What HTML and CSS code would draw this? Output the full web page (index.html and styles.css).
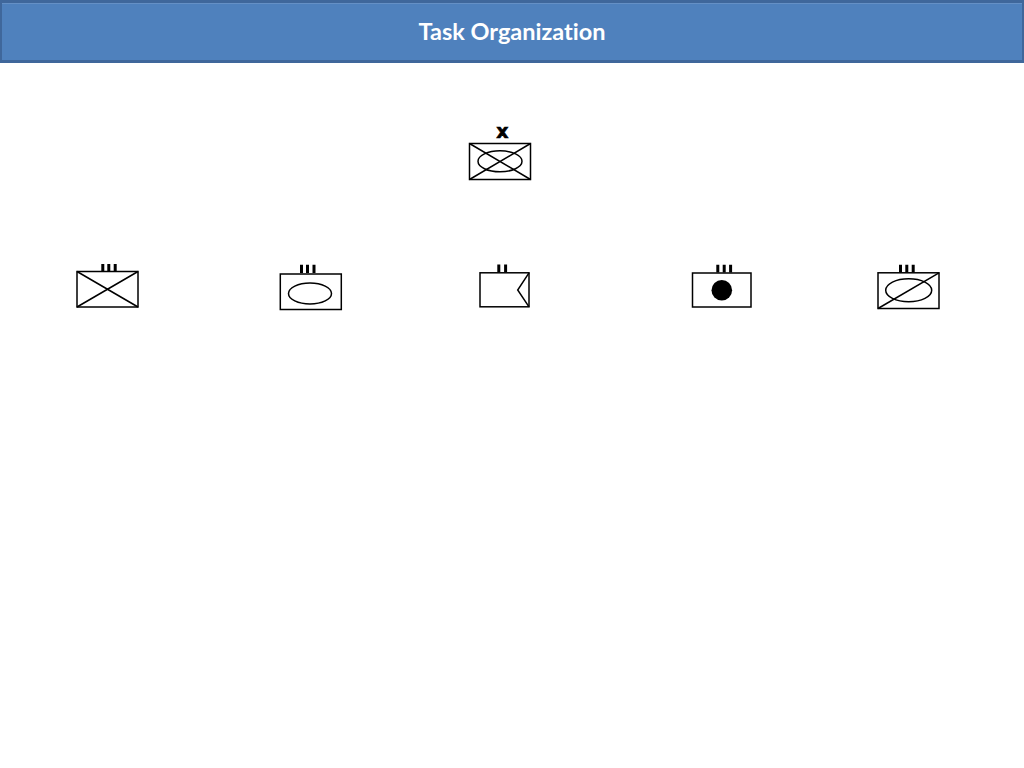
FILE: index.html
```html
<!DOCTYPE html>
<html lang="en">
<head>
<meta charset="utf-8">
<title>Task Organization</title>
<link rel="stylesheet" href="styles.css">
</head>
<body>
<header class="title-bar"><h1 class="title">Task Organization</h1></header>
<main class="chart">
  <svg class="unit unit-hq" viewBox="466 124 68 58">
    <text class="echelon-x" x="502.5" y="138" text-anchor="middle">x</text>
    <rect class="line" x="469.5" y="143.5" width="61" height="36"/>
    <path class="line" d="M469.5 143.5L530.5 179.5M530.5 143.5L469.5 179.5"/>
    <ellipse class="line" cx="500" cy="161.3" rx="22" ry="10.5"/>
  </svg>
  <svg class="unit unit-a" viewBox="74 262 68 48">
    <path class="tick" d="M102.8 264V271M108.8 264V271M115.2 264V271"/>
    <rect class="line" x="77" y="271.5" width="61" height="35.5"/>
    <path class="line" d="M77 271.5L138 307M138 271.5L77 307"/>
  </svg>
  <svg class="unit unit-b" viewBox="278 262 68 50">
    <path class="tick" d="M301.5 264.7V273M307.5 264.7V273M314 264.7V273"/>
    <rect class="line" x="280.3" y="274" width="61" height="35.5"/>
    <ellipse class="line" cx="310" cy="293.5" rx="21.5" ry="10.5"/>
  </svg>
  <svg class="unit unit-c" viewBox="476 262 58 48">
    <path class="tick" d="M498.8 264.5V272M505.6 264.5V272"/>
    <rect class="line" x="480" y="272.8" width="49" height="34"/>
    <path class="line" d="M529 272.8L517.7 290L529 306.8"/>
  </svg>
  <svg class="unit unit-d" viewBox="690 262 64 48">
    <path class="tick" d="M717.8 264.7V272.5M724.2 264.7V272.5M730.6 264.7V272.5"/>
    <rect class="line" x="692.5" y="273" width="58.5" height="34"/>
    <circle class="dot" cx="721.8" cy="290.3" r="10.3"/>
  </svg>
  <svg class="unit unit-e" viewBox="876 262 66 49">
    <path class="tick" d="M900.5 264.7V272.2M906.8 264.7V272.2M913.2 264.7V272.2"/>
    <rect class="line" x="878" y="272.8" width="61" height="35.7"/>
    <path class="line" d="M878 308.5L939 272.8"/>
    <ellipse class="line" cx="908.7" cy="290.3" rx="23" ry="11.5"/>
  </svg>
</main>
</body>
</html>
```
FILE: styles.css
```css
html, body {
  margin: 0;
  padding: 0;
  background: #ffffff;
}
body {
  width: 1024px;
  height: 768px;
  overflow: hidden;
  display: flex;
  flex-direction: column;
}
.title-bar {
  box-sizing: border-box;
  height: 63px;
  flex: none;
  display: flex;
  align-items: center;
  justify-content: center;
  padding-top: 1px;
  background: #4f81bd;
  border: 2px solid #3f679b;
  border-top-width: 3px;
  border-bottom-width: 3px;
  box-shadow: inset 0 1px 0 #6590c5;
}
.title {
  margin: 0;
  font-family: "Lato", "Open Sans", sans-serif;
  font-weight: 700;
  font-size: 23.5px;
  line-height: 1;
  font-variant-ligatures: none;
  color: #ffffff;
}
.chart {
  position: relative;
  flex: 1;
}
.unit {
  position: absolute;
  overflow: visible;
}
.line {
  fill: none;
  stroke: #000000;
  stroke-width: 1.5;
}
.tick {
  fill: none;
  stroke: #000000;
  stroke-width: 3;
}
.dot {
  fill: #000000;
}
.echelon-x {
  font-family: "DejaVu Sans", sans-serif;
  font-weight: 700;
  font-size: 19px;
  stroke: #000000;
  stroke-width: 0.6;
}
.unit-hq { left: 466px; top: 61px;  width: 68px; height: 58px; }
.unit-a  { left: 74px;  top: 199px; width: 68px; height: 48px; }
.unit-b  { left: 278px; top: 199px; width: 68px; height: 50px; }
.unit-c  { left: 476px; top: 199px; width: 58px; height: 48px; }
.unit-d  { left: 690px; top: 199px; width: 64px; height: 48px; }
.unit-e  { left: 876px; top: 199px; width: 66px; height: 49px; }
```
